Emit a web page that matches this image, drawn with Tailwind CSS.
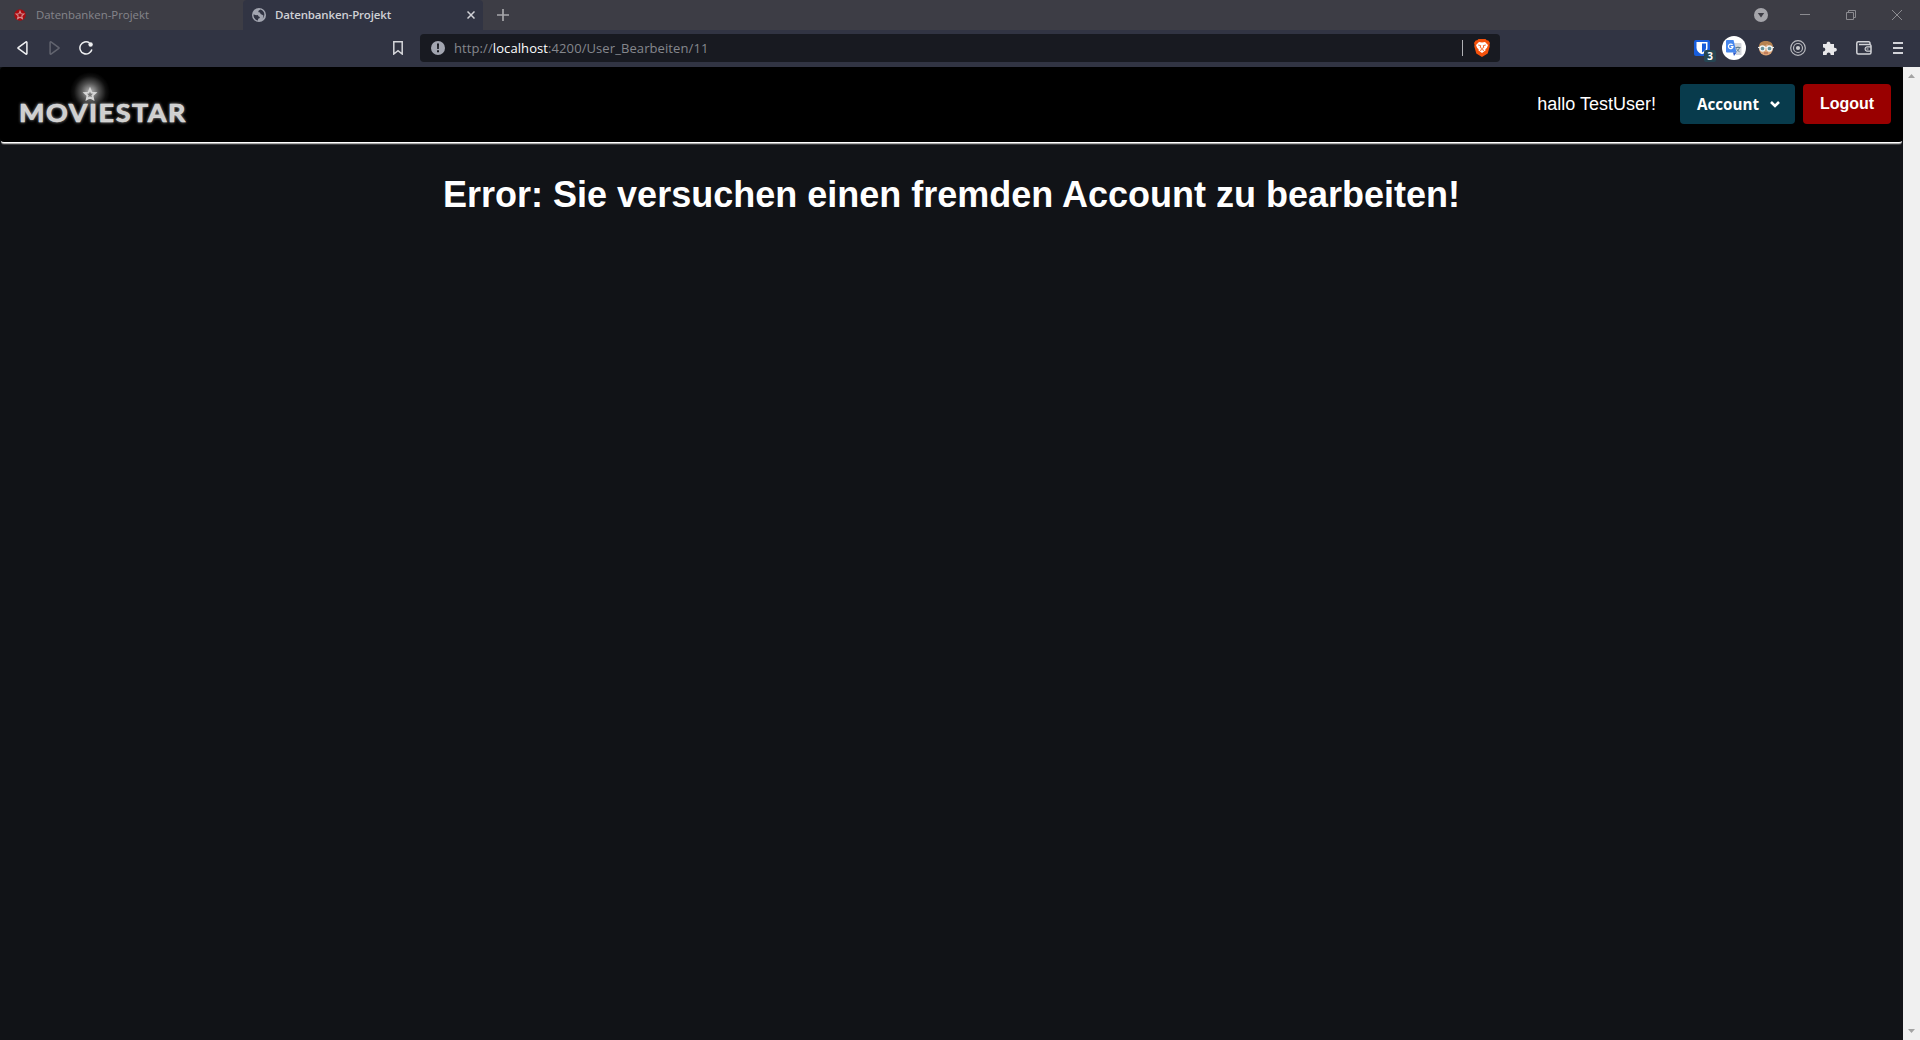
<!DOCTYPE html>
<html lang="de">
<head>
<meta charset="utf-8">
<title>Datenbanken-Projekt</title>
<script src="https://cdn.jsdelivr.net/npm/@tailwindcss/browser@4"></script>
</head>
<body class="w-[1920px] h-[1040px] overflow-hidden bg-[#111317] flex flex-col font-['Open_Sans',sans-serif]">
<!-- Tab strip -->
<div class="h-[30px] shrink-0 bg-[#3d3d45] flex">
  <div class="w-[243px] flex items-center pl-[14px]">
    <svg class="w-3 h-3 shrink-0" viewBox="0 0 12 12"><circle cx="6" cy="6" r="5.7" fill="#a90b10"/><path d="M6 2.2l1.1 2.6 2.8.2-2.1 1.9.6 2.7L6 8.2 3.600 9.600l.6-2.700L2.100 5l2.800-.2z" fill="none" stroke="#d58a8d" stroke-width="1.1"/></svg>
    <span class="ml-[10px] text-[11.4px] leading-4 text-[#85858b] whitespace-nowrap">Datenbanken-Projekt</span>
  </div>
  <div class="w-[240px] bg-[#313443] rounded-t-[4px] flex items-center pl-[9px]">
    <svg class="w-[14px] h-[14px] shrink-0" viewBox="0 0 14 14"><circle cx="7" cy="7" r="7" fill="#a2a5b0"/><path d="M1.500 6.600c1.500.3 2.600.7 3.600.5 1.400-.2.800 1.600 2.300 1.700.9.1.3 1.600-.8 1.800-.7.200-.4 1.200-.6 1.900-2.700-.6-4.700-2.900-4.500-5.900zM8.400 1.600C7 2.300 6 3 6.500 4c.5.900 1.700.3 1.900 1.400.3 1.300 2.300.9 2.900 2.200.3.800-.4 1.600-.6 2.800 2.800-2.900 2-7.500-2.300-8.800z" fill="#313443"/></svg>
    <span class="ml-[9px] text-[11.5px] leading-4 font-semibold tracking-[-0.15px] text-[#cfd0d5] whitespace-nowrap w-[180px]">Datenbanken-Projekt</span>
    <svg class="ml-[12px] w-[8px] h-[8px] shrink-0" viewBox="0 0 8 8"><path d="M.5.5l7 7m0-7l-7 7" stroke="#d0d1d6" stroke-width="1.5"/></svg>
  </div>
  <div class="flex-1 flex items-center pl-[14px]">
    <svg class="w-3 h-3" viewBox="0 0 12 12"><path d="M6 0v12M0 6h12" stroke="#a6a6aa" stroke-width="1.7"/></svg>
  </div>
  <div class="w-[166px] flex items-center">
    <svg class="w-[14px] h-[14px]" viewBox="0 0 14 14"><circle cx="7" cy="7" r="7" fill="#a5a5aa"/><path d="M3.800 5h6.400L7 9.600z" fill="#3d3d45"/></svg>
    <svg class="ml-8 w-[10px] h-[10px]" viewBox="0 0 10 10"><path d="M0 4.500h10" stroke="#8b8b90"/></svg>
    <svg class="ml-[36px] w-[10px] h-[10px]" viewBox="0 0 10 10"><path d="M.5 2.500h7v7h-7zM2.500 2.500v-2h7v7h-2" fill="none" stroke="#8b8b90"/></svg>
    <svg class="ml-[36px] w-[10px] h-[10px]" viewBox="0 0 10 10"><path d="M0 0l10 10M10 0L0 10" stroke="#8b8b90"/></svg>
  </div>
</div>
<!-- Toolbar -->
<div class="h-[37px] shrink-0 bg-[#313443] flex items-start">
  <div class="w-[393px] h-9 flex items-center pl-[17px]">
    <svg class="w-[11px] h-[14px]" viewBox="0 0 11 14"><path d="M9.900 1.400v11.200c0 .5-.5.700-.9.500L1.200 7.400q-.4-.4 0-.8L9 .9c.4-.2.900 0 .9.500z" fill="none" stroke="#eff0f2" stroke-width="1.500"/></svg>
    <svg class="ml-[21px] w-[11px] h-[14px]" viewBox="0 0 11 14"><path d="M1.100 1.400v11.200c0 .5.500.7.900.5l7.800-5.700q.4-.4 0-.8L2 .9c-.4-.2-.9 0-.9.500z" fill="none" stroke="#62646f" stroke-width="1.500"/></svg>
    <svg class="ml-[19px] w-[14px] h-[14px]" viewBox="0 0 14 14"><path d="M10.500 1.900A6.100 6.100 0 1 0 12.900 8.500" fill="none" stroke="#eff0f2" stroke-width="1.500"/><circle cx="11.600" cy="3.500" r="2.200" fill="#eff0f2"/></svg>
  </div>
  <div class="w-[27px] h-9 flex items-center"><svg class="w-[10px] h-[14px]" viewBox="0 0 10 14"><path d="M.8.8h8.400v12.200L5 9.700.8 13z" fill="none" stroke="#d6d7db" stroke-width="1.500"/></svg></div>
  <div class="mt-1 w-[1080px] h-7 rounded-[4px] bg-[#181a21] flex items-center pl-[11px]">
    <svg class="w-[14px] h-[14px] shrink-0" viewBox="0 0 14 14"><circle cx="7" cy="7" r="7" fill="#a2a5b0"/><path d="M6 2.500h2L7.800 8H6.200zM6 9.300h2v2H6z" fill="#181a21"/></svg>
    <span class="ml-[9px] w-[1008px] text-[13px] leading-5 tracking-[0.09px] text-[#85878d] whitespace-nowrap">http://<span class="text-white">localhost</span>:4200/User_Bearbeiten/11</span>
    <span class="w-px h-4 bg-[#b0b1b5] shrink-0"></span>
    <svg class="ml-[11px] w-4 h-[18px] shrink-0" viewBox="0 0 16 18"><path d="M4.500 0h7l1.300 1.300 1.500.2L16 4l-.5 1.500.2 2-2 7L8 18l-5.700-3.500-2-7 .2-2L0 4l1.700-2.500 1.500-.2z" fill="#f4510b"/><path d="M5 3l3 .5L11 3l3 3-1.200 3-1.500 1.200.4 1L8 14l-3.700-2.800.4-1L3.200 9 2 6z" fill="#fff"/><path d="M4.200 6l2.500.6-.5 1.900 1.800 1 1.800-1-.5-1.900L11.800 6M6 11.500l2-1 2 1" fill="none" stroke="#f4510b" stroke-width=".9"/></svg>
  </div>
  <div class="w-[420px] h-9 flex items-center pl-[194px]">
    <div class="relative w-4 h-4">
      <svg class="w-4 h-4" viewBox="0 0 16 16"><rect width="16" height="16" rx="2" fill="#175ddc"/><path d="M2.500 2h11v6c0 3-2.500 4.900-5.500 6.300C5 12.900 2.500 11 2.500 8z" fill="#fff"/><path d="M8 3.500h4v4.600c0 2-1.800 3.400-4 4.500z" fill="#175ddc"/></svg>
      <span class="absolute left-[10px] top-[10px] w-3 h-3 rounded-[2px] bg-[#264653] text-white text-[10px] leading-3 font-bold text-center">3</span>
    </div>
    <svg class="ml-3 w-6 h-6" viewBox="0 0 24 24"><circle cx="12" cy="12" r="12" fill="#fff"/><path d="M11 7h7.500a1 1 0 0 1 1 1v11H14z" fill="#d3d6dc"/><path d="M13.500 11.500h5M16 10.500v1M17.500 11.500c-.5 2-1.500 3-3 4M14.500 12.500c.7 1.600 1.800 2.600 3 3.200" fill="none" stroke="#617f8e" stroke-width="1"/><path d="M5 4h6.500l3 12.500H5a1 1 0 0 1-1-1V5a1 1 0 0 1 1-1z" fill="#4787ed"/><path d="M11 16.500h3.500l-2.500 3.500z" fill="#2a56c6"/><path d="M10.600 9A2.300 2.300 0 1 0 11 10.700H8.800" fill="none" stroke="#fff" stroke-width="1.200"/></svg>
    <svg class="ml-3 w-4 h-4" viewBox="0 0 16 16"><circle cx="8" cy="8.500" r="7" fill="#dda477"/><path d="M1 7C1 2.500 4 1 8 1s7 2 7 6c-3 0-4-2-6-3-1 2-4 3-8 3z" fill="#b58250"/><path d="M0 7.500h16" stroke="#e4e9e9" stroke-width="1.200"/><circle cx="4.500" cy="8.500" r="2.500" fill="#67919a" stroke="#eef3f3" stroke-width="1.300"/><circle cx="11.500" cy="8.500" r="2.500" fill="#67919a" stroke="#eef3f3" stroke-width="1.300"/><path d="M6 13h4" stroke="#a65b47"/></svg>
    <svg class="ml-4 w-4 h-4" viewBox="0 0 16 16"><g fill="none" stroke="#b9babf" stroke-width="1.200"><circle cx="8" cy="8" r="7.300"/><circle cx="8" cy="8" r="4.500"/></g><circle cx="8" cy="8" r="2.100" fill="#c8c9cd"/></svg>
    <svg class="ml-4 w-[15px] h-[15px]" viewBox="0 0 15 15"><path d="M1 3h3.600C4.200 0 8.800 0 8.400 3H12v3.800c3.800-.4 3.800 4.300 0 3.900V14H8.600c.4-3.300-4.300-3.300-3.900 0H1v-3.600c3 .4 3-4.200 0-3.800z" fill="#e8e8ea"/></svg>
    <svg class="ml-[19px] w-4 h-[14px]" viewBox="0 0 16 14"><path d="M14 3.300V2.200c0-.8-.5-1.400-1.300-1.400H2.200C1.300.8.8 1.300.8 2.200v9.300c0 .9.600 1.500 1.400 1.500h11.300c.9 0 1.500-.6 1.500-1.500V4.900c0-.8-.5-1.300-1.300-1.300H3" fill="none" stroke="#d2d3d8" stroke-width="1.500"/><path d="M15 5.900h-4.200a2.200 2.200 0 0 0 0 4.300H15M10.500 8h2" fill="none" stroke="#d2d3d8" stroke-width="1.200"/></svg>
    <svg class="ml-[21px] w-[10px] h-3" viewBox="0 0 10 12"><path d="M0 1h10M0 6h10M0 11h10" stroke="#d2d3d8" stroke-width="1.800"/></svg>
  </div>
</div>
<!-- Page -->
<div class="flex-1 flex min-h-0">
  <main class="w-[1903px] font-['Liberation_Sans',Arial,sans-serif] text-white">
    <header class="h-[75px] bg-black rounded-[4px] shadow-[0_2px_0_-1px_#ffffff,0_3px_0_-1px_#aaaaaa,0_4px_0_-1px_#3c3d40] flex items-start pr-3 pl-[10px]">
      <svg class="w-[200px] h-[70px]" viewBox="10 67 200 70" role="img" aria-label="Moviestar">
        <defs>
          <radialGradient id="halo"><stop offset="0" stop-color="#fff" stop-opacity=".75"/><stop offset=".45" stop-color="#fff" stop-opacity=".32"/><stop offset=".8" stop-color="#fff" stop-opacity=".06"/><stop offset="1" stop-color="#fff" stop-opacity="0"/></radialGradient>
          <filter id="glow" x="-10%" y="-50%" width="120%" height="200%"><feGaussianBlur stdDeviation="1.500"/></filter>
        </defs>
        <circle cx="90" cy="92" r="20" fill="url(#halo)"/>
        <path d="M90 89.200l1.500 3.400 3.700.4-2.800 2.500.8 3.600-3.200-1.800-3.200 1.800.8-3.600-2.800-2.500 3.700-.4z" fill="#777" stroke="#d6d6d6" stroke-width="1.900"/>
        <g font-family="Lato" font-weight="700" font-size="25.500">
          <text x="19" y="122" textLength="168" lengthAdjust="spacingAndGlyphs" letter-spacing="1.500" fill="#aaa" stroke="#aaa" stroke-width=".6" filter="url(#glow)" aria-hidden="true">MOVIESTAR</text>
          <text x="19" y="122" textLength="168" lengthAdjust="spacingAndGlyphs" letter-spacing="1.500" fill="#cfcfcf" stroke="#dedede" stroke-width=".6">MOVIESTAR</text>
        </g>
      </svg>
      <div class="flex-1"></div>
      <span class="mt-[25px] mr-[24px] text-[18px] leading-6 whitespace-nowrap">hallo TestUser!</span>
      <button class="mt-[17px] w-[115px] h-10 rounded-[4px] bg-[#083b4c] flex items-center pl-[17px] font-['Open_Sans',sans-serif] font-bold text-[15.2px]"><span class="w-[73px] text-left">Account</span>
        <svg class="w-[10px] h-[7px]" viewBox="0 0 10 7"><path d="M1 1l4 4 4-4" fill="none" stroke="#fff" stroke-width="2.600"/></svg>
      </button>
      <button class="mt-[17px] ml-2 w-[88px] h-10 rounded-[4px] bg-[#990000] font-bold text-[16px]">Logout</button>
    </header>
    <h1 class="mt-[32px] text-center text-[36px] leading-[42px] font-bold">Error: Sie versuchen einen fremden Account zu bearbeiten!</h1>
  </main>
  <div class="w-[17px] bg-[#f0f0f0] flex flex-col items-center justify-between pt-[7px] pb-[7px]">
    <svg class="w-[7px] h-1" viewBox="0 0 7 4"><path d="M0 4L3.500 0 7 4z" fill="#a3a3a3"/></svg>
    <svg class="w-[7px] h-1" viewBox="0 0 7 4"><path d="M0 0l3.500 4L7 0z" fill="#a3a3a3"/></svg>
  </div>
</div>
</body>
</html>
